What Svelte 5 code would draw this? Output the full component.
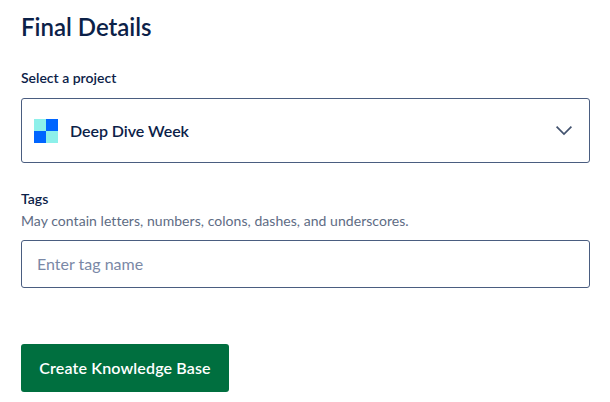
<script lang="ts">
  let tag = $state('');
</script>

<main>
  <h1>Final Details</h1>

  <div class="field project">
    <span class="label">Select a project</span>
    <button type="button" class="select">
      <svg class="logo" viewBox="0 0 24 24" width="24" height="24" aria-hidden="true">
        <rect width="24" height="24" fill="#8df0ea" />
        <rect x="12" width="12" height="12" fill="#0065ff" />
        <rect y="12" width="12" height="12" fill="#0065ff" />
      </svg>
      <span class="value">Deep Dive Week</span>
      <svg class="chevron" viewBox="0 0 18 11" width="18" height="11" aria-hidden="true">
        <path d="M1.6 1.6 L9 9 L16.4 1.6" fill="none" stroke="#42526e" stroke-width="1.7" />
      </svg>
    </button>
  </div>

  <div class="field tags">
    <label class="label" for="tags">Tags</label>
    <p class="hint">May contain letters, numbers, colons, dashes, and underscores.</p>
    <input id="tags" placeholder="Enter tag name" bind:value={tag} />
  </div>

  <button type="button" class="create">Create Knowledge Base</button>
</main>

<style>
  :global(body) {
    background: #fff;
  }

  main {
    display: flex;
    flex-direction: column;
    align-items: flex-start;
    padding: 13px 20px 10px 21px;
    font-family: Lato, "Open Sans", sans-serif;
    color: #0b2148;
  }

  h1 {
    margin: 0;
    font-size: 24px;
    line-height: 28px;
    font-weight: 600;
  }

  .field {
    width: 100%;
  }

  .project {
    margin-top: 27px;
  }

  .tags {
    margin-top: 26px;
  }

  .label {
    display: block;
    font-size: 14px;
    line-height: 20px;
    font-weight: 600;
  }

  .project .label {
    margin-bottom: 10px;
  }

  .select {
    display: flex;
    align-items: center;
    box-sizing: border-box;
    width: 100%;
    height: 65px;
    padding: 0 16px 0 12px;
    background: #fff;
    border: 1px solid #4a5d80;
    border-radius: 3px;
    font: inherit;
    color: inherit;
  }

  .value {
    margin-left: 12px;
    font-size: 16px;
    font-weight: 600;
    letter-spacing: -0.05px;
  }

  .chevron {
    margin-left: auto;
  }

  .hint {
    margin: 2px 0 9px;
    font-size: 14px;
    line-height: 20px;
    letter-spacing: 0.05px;
    color: #5e6c84;
  }

  input {
    display: block;
    box-sizing: border-box;
    width: 100%;
    height: 48px;
    padding: 0 15px 2px;
    border: 1px solid #4a5d80;
    border-radius: 3px;
    font: inherit;
    font-size: 16px;
    color: inherit;
  }

  input::placeholder {
    color: #7a88a6;
    opacity: 1;
  }

  .create {
    margin-top: 56px;
    padding: 0 0 2px;
    width: 208px;
    height: 48px;
    background: #006f3f;
    border: 0;
    border-radius: 3px;
    font: inherit;
    font-size: 16px;
    font-weight: 600;
    letter-spacing: 0.15px;
    color: #fff;
  }
</style>
